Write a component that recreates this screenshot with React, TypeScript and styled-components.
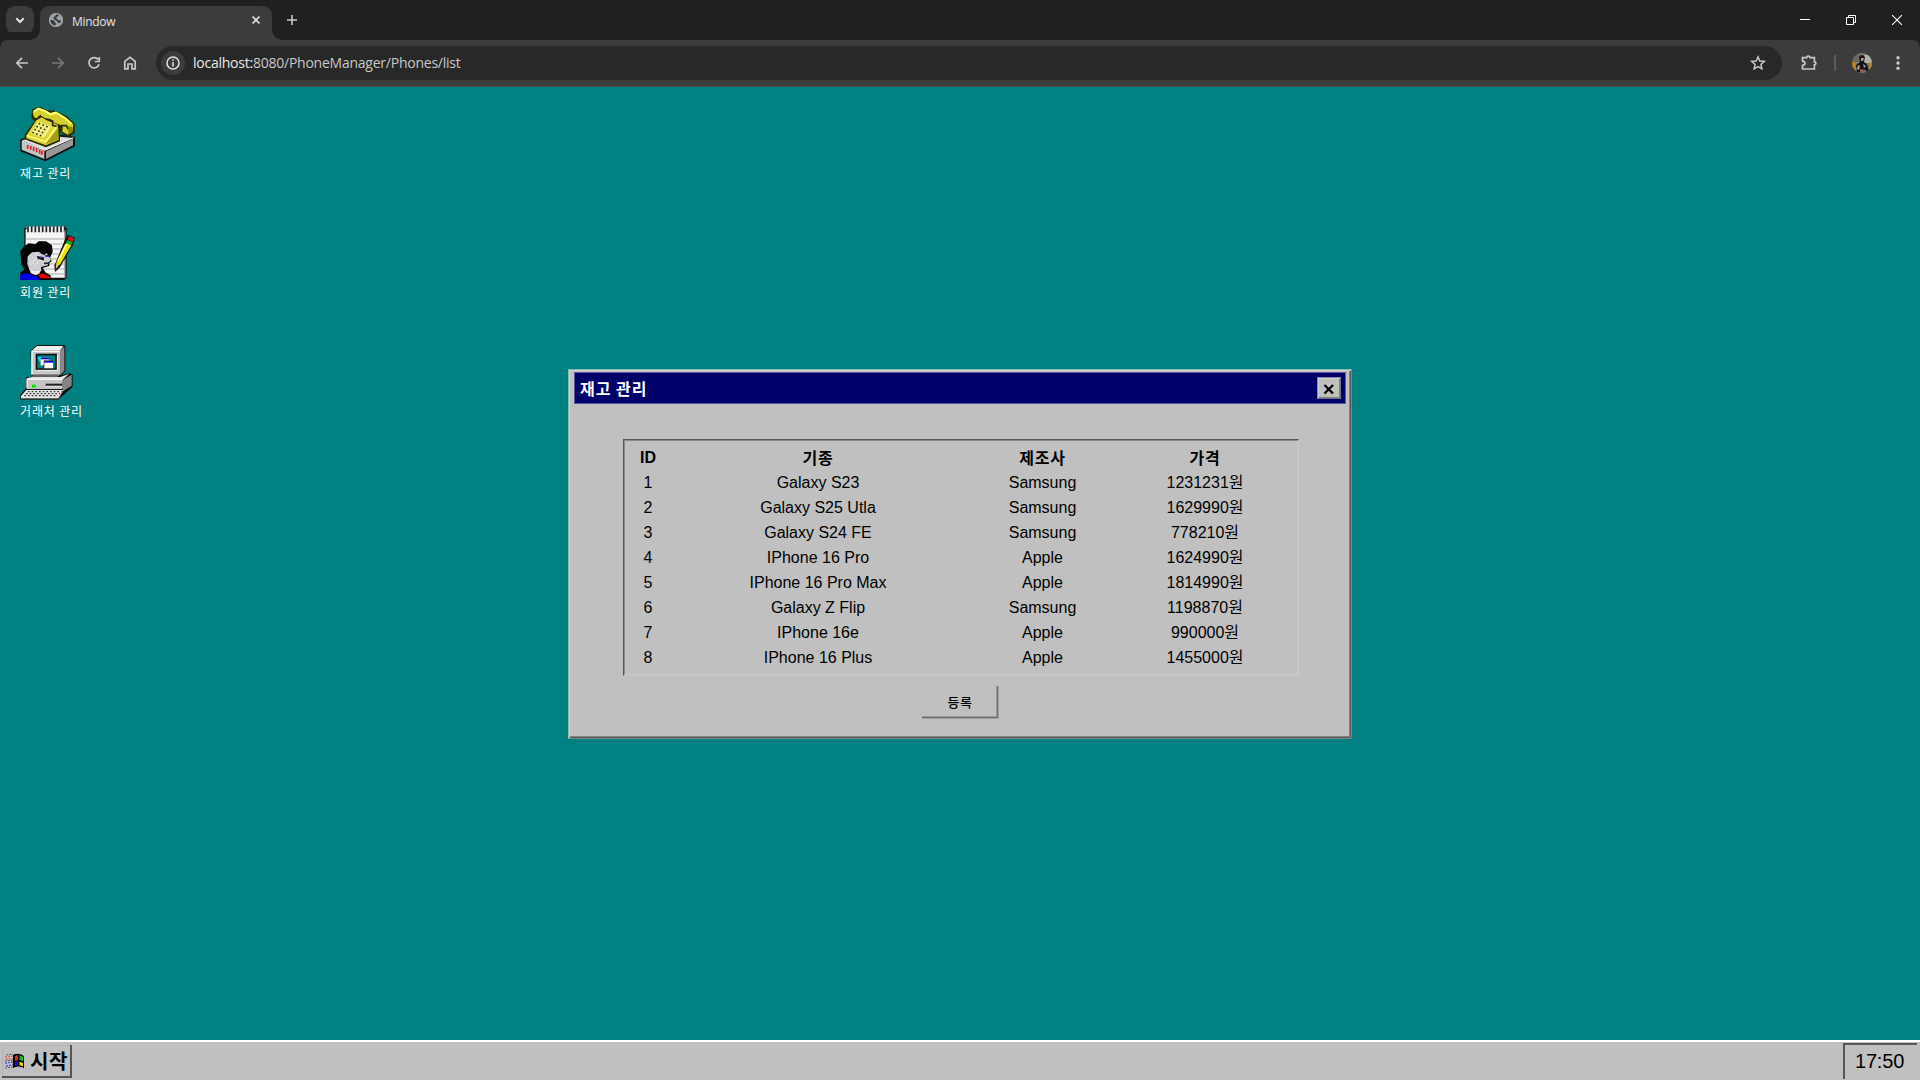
import React from "react";
import styled, { createGlobalStyle } from "styled-components";

const Global = createGlobalStyle`
  * { box-sizing: border-box; }
  body { margin: 0; overflow: hidden; background: #008080; }
`;

const retro = `"Liberation Sans", "Noto Sans CJK KR", sans-serif`;
const chrome = `"Open Sans", "Noto Sans", sans-serif`;

const Screen = styled.div`
  width: 1920px;
  height: 1080px;
  display: flex;
  flex-direction: column;
  font-family: ${retro};
`;

/* Browser frame */
const TabStrip = styled.div`
  height: 40px;
  flex: none;
  display: flex;
  background: #1f2120;
  padding-left: 6px;
`;
const TabSearch = styled.div`
  width: 28px;
  height: 28px;
  margin-top: 6px;
  border-radius: 9px;
  background: #3c3c3c;
`;
const Tab = styled.div`
  position: relative;
  width: 232px;
  height: 34px;
  margin: 6px 0 0 6px;
  border-radius: 9px 9px 0 0;
  background: #3c3c3c;
  display: flex;
  align-items: center;
  padding: 0 9px 6px 8px;
  &::before, &::after {
    content: "";
    position: absolute;
    bottom: 0;
    width: 10px;
    height: 10px;
  }
  &::before { left: -10px; background: radial-gradient(circle at 0 0, transparent 9.5px, #3c3c3c 10px); }
  &::after { right: -10px; background: radial-gradient(circle at 100% 0, transparent 9.5px, #3c3c3c 10px); }
`;
const TabTitle = styled.span`
  flex: 1;
  margin-left: 8px;
  padding-top: 3px;
  font: 12px/16px ${chrome};
  letter-spacing: -0.3px;
  color: #e3e3e3;
`;
const NewTab = styled.div`
  margin: 12px 0 0 12px;
  width: 16px;
  height: 16px;
`;
const WindowButtons = styled.div`
  margin-left: auto;
  height: 40px;
  display: flex;
  gap: 36px;
  padding: 15px 18px 0 0;
`;
const Toolbar = styled.div`
  height: 47px;
  flex: none;
  display: flex;
  align-items: center;
  background: #3c3c3c;
  border-bottom: 1px solid #514f4e;
  padding: 0 12px;
  border-radius: 8px 8px 0 0;
  box-shadow: 0 -8px 0 #1f2120;
`;
const NavButtons = styled.div`
  display: flex;
  gap: 16px;
  width: 144px;
  flex: none;
`;
const AddressBar = styled.div`
  width: 1626px;
  flex: none;
  height: 34px;
  border-radius: 17px;
  background: #282828;
  display: flex;
  align-items: center;
  padding: 0 14px 0 5px;
`;
const InfoBadge = styled.div`
  width: 24px;
  height: 24px;
  border-radius: 50%;
  background: #3c3c3c;
`;
const Url = styled.div`
  flex: 1;
  margin-left: 8px;
  font: 14px/20px ${chrome};
  letter-spacing: -0.24px;
  color: #c7c7c7;
`;
const Host = styled.span`
  color: #e8e8e8;
`;
const Extras = styled.div`
  display: flex;
  align-items: center;
  flex: none;
  margin-left: 17px;
`;
const Divider = styled.i`
  width: 2px;
  height: 16px;
  margin: 0 16px 0 15px;
  background: #5b5b5b;
`;
const MenuSlot = styled.div`
  margin-left: 16px;
  height: 20px;
`;

/* Desktop */
const Desktop = styled.main`
  flex: 1;
  background: #008080;
  padding-top: 20px;
  display: flex;
  position: relative;
`;
const Shortcuts = styled.nav`
  display: flex;
  flex-direction: column;
  padding-left: 20px;
`;
const Shortcut = styled.a`
  height: 119px;
  color: #fff;
  font: 12px/18px "Noto Sans CJK KR", sans-serif;
  letter-spacing: 0.85px;
  svg { display: block; }
  span { display: block; margin-top: 1px; white-space: nowrap; }
`;
const Dialog = styled.section`
  position: absolute;
  left: 568px;
  top: 282px;
  width: 784px;
  height: 370px;
  background: #c0c0c0;
  border: 1px solid;
  border-color: #8fb9b9 #7b8484 #7b8484 #8fb9b9;
  box-shadow: inset 1px 1px #d0d0d0, inset -1px -1px #5b5b5b, inset -2px -2px #808080;
  padding: 2px 5px;
  display: flex;
  flex-direction: column;
`;
const TitleBar = styled.header`
  height: 32px;
  background: #00006a;
  border: 1px solid #59599b;
  display: flex;
  align-items: center;
  justify-content: space-between;
  padding: 0 4px 0 5px;
  color: #fff;
  font: bold 16px/24px "Noto Sans CJK KR", sans-serif;
  letter-spacing: 1px;
`;
const CloseButton = styled.button`
  width: 24px;
  height: 22px;
  margin: 0;
  padding: 1px 1px 0 0;
  background: #c0c0c0;
  border: 1px solid;
  border-color: #8585b0 #707080 #707080 #8585b0;
  box-shadow: inset 1px 1px #d0d0d0, inset -1px -1px #808080;
  display: grid;
  place-items: center;
`;
const ListFrame = styled.div`
  margin: 35px 47px 0 49px;
  height: 237px;
  border: 1px solid;
  border-color: #555 #c7c7c7 #c7c7c7 #555;
  box-shadow: inset 1px 1px #8b8b8b, inset -1px -1px #c6c6c6;
  padding: 5px 0 0 1px;
`;
const Row = styled.div`
  display: grid;
  grid-template-columns: 46px 294px 155px 170px;
  height: 25px;
  line-height: 25px;
  font-size: 16px;
  color: #000;
  text-align: center;
`;
const Cell = styled.span`
  white-space: nowrap;
`;
const HeadCell = styled(Cell)<{ $hangul?: boolean }>`
  font-weight: 700;
  letter-spacing: ${(p) => (p.$hangul ? "0.7px" : "0")};
  padding-top: ${(p) => (p.$hangul ? "1px" : "0")};
`;
const RegisterButton = styled.button`
  align-self: center;
  width: 77px;
  height: 33px;
  margin: 10px 0 0 1px;
  padding: 0 1px 2px 0;
  background: #c0c0c0;
  border: 0;
  box-shadow: inset -1px -1px #a0a0a0, inset -2px -2px #707070, inset -3px -3px #989898;
  font: 500 13px/20px "Noto Sans CJK KR", sans-serif;
  letter-spacing: 0.5px;
  color: #000;
`;
const Taskbar = styled.footer`
  height: 40px;
  flex: none;
  background: #c0c0c0;
  border-top: 2px solid #fff;
  display: flex;
  justify-content: space-between;
  padding: 0 3px 0 2px;
`;
const StartButton = styled.button`
  width: 70px;
  height: 33px;
  margin: 3px 0 0;
  padding: 0 0 1px 3px;
  border: 0;
  background: #c0c0c0;
  box-shadow: inset -2px -2px #555, inset 1px 1px #b4b4b4;
  display: flex;
  align-items: center;
  font: bold 20px/28px "Noto Sans CJK KR", sans-serif;
  letter-spacing: 0.7px;
  gap: 4px;
  color: #000;
`;
const Clock = styled.div`
  width: 74px;
  height: 36px;
  margin-top: 1px;
  border-left: 2px solid #555;
  border-top: 2px solid #555;
  padding-left: 10px;
  font-size: 20px;
  line-height: 33px;
  letter-spacing: -0.2px;
  color: #000;
`;

const Stroke: React.FC<{ d: string; size?: number; color?: string; w?: number; children?: React.ReactNode }> = ({
  d, size = 20, color = "#c7c7c7", w = 1.7, children,
}) => (
  <svg width={size} height={size} viewBox={`0 0 ${size} ${size}`} fill="none" stroke={color} strokeWidth={w}>
    <path d={d} />
    {children}
  </svg>
);

const PhoneIcon = () => (
  <svg width="56" height="56" viewBox="30 36 168 168">
    <path d="M31 133L100 112L195 125V154L106 199L31 169Z" fill="#111" />
    <path d="M36 136L95 120L190 129L105 166Z" fill="#ddd" />
    <path d="M35 139L103 168V192L35 164Z" fill="#c4c4c4" />
    <path d="M108 169L189 131V151L108 192Z" fill="#999" />
    <path d="M36 138L104 166L190 128" fill="none" stroke="#fff" strokeWidth="3" />
    <path d="M53 150v11M62 153v11M71 157v11M80 160v12M89 164v12M96 167v12" stroke="#e11b24" strokeWidth="5" />
    <path d="M67 43L88 35L110 45L134 47L171 64L194 86V115L174 127L156 116L150 109V139L108 157L44 133V119L73 79L64 69Z" fill="#2b2b00" />
    <path d="M68 51L82 39L101 43L121 54L137 50L169 68L190 88L187 111L174 119L157 110L158 92L133 83L121 73L105 69L93 62L81 70L72 67Z" fill="#d5cf2c" />
    <path d="M71 50L86 41L107 49L121 58L138 53L166 70L184 86" fill="none" stroke="#ffff78" strokeWidth="6" />
    <path d="M78 77L95 67L110 76L143 89L146 134L108 151L49 130V122Z" fill="#dcd63a" />
    <path d="M50 121L107 140L141 93" fill="none" stroke="#ffff70" strokeWidth="4" />
    <path d="M110 143L145 98V132L110 148Z" fill="#a39b18" />
    <path d="M84 79L123 95L102 128L63 115Z" fill="#f6f08a" />
    <path d="M86 85L116 97M79 94L110 106M73 103L104 115M67 112L98 124" stroke="#3a3a08" strokeWidth="5" strokeDasharray="5 7" />
    <path d="M112 72L128 78V91L140 94M153 92H169L175 103M93 61L83 69" fill="none" stroke="#343000" strokeWidth="5" />
    <path d="M175 93L187 97V110L175 117Z" fill="#908706" />
  </svg>
);

const MemberIcon = () => (
  <svg width="56" height="56" viewBox="30 33 168 168">
    <path d="M43 39H170V189L162 195H43Z" fill="#111" />
    <path d="M47 43H165V188H47Z" fill="#f5f5f5" />
    <path d="M47 72H162M47 87H162M47 102H162M47 117H162M47 132H162M47 147H162M47 162H162M47 177H162" stroke="#c4c4c4" strokeWidth="4" />
    <path d="M50 43H165" stroke="#eee" strokeWidth="17" />
    <path d="M54 34V52M65 34V52M76 34V52M87 34V52M98 34V52M109 34V52M120 34V52M131 34V52M142 34V52M153 34V52M164 34V52" stroke="#222" strokeWidth="5" />
    <path d="M165 45V188" stroke="#888" strokeWidth="4" />
    <path d="M31 109L42 94L57 85L76 88L86 79H108L126 91L128 110L120 128L125 139L118 143V153L98 159L108 174L122 181V195H31V173L43 163L34 147Z" fill="#000" />
    <path d="M53 124L66 112L87 110L95 117L104 120L110 114L116 124L123 135L114 143V151L93 156L94 167L78 174L58 164L52 146Z" fill="#cbcbd2" />
    <path d="M55 130L83 157M61 121L90 151M70 115L98 143M78 114L104 137M58 151L88 120M71 158L100 123" stroke="#fff" strokeWidth="3" strokeDasharray="3 4" />
    <path d="M84 126L99 128V133L85 129ZM101 108H111M106 123L121 122" fill="none" stroke="#111" strokeWidth="5" />
    <path d="M87 128H97M106 124H118" stroke="#3535dc" strokeWidth="4" />
    <path d="M102 145H115" stroke="#222" strokeWidth="5" />
    <path d="M31 195V181L44 174L67 179L88 190V195Z" fill="#0000e9" />
    <path d="M85 181L96 175L118 184L120 190H92Z" fill="#f00000" />
    <path d="M59 162L72 168L92 167L87 177L76 180L62 174Z" fill="#eee" />
    <path d="M167 69L175 59L194 68L192 84L150 157L135 171L133 152Z" fill="#111" />
    <path d="M170 83L184 91L150 149L139 151V143Z" fill="#e8e000" />
    <path d="M169 87L144 139" stroke="#ffff80" strokeWidth="6" />
    <path d="M172 75L188 82L184 90L168 83Z" fill="#00b631" />
    <path d="M177 62L193 70L188 81L173 74Z" fill="#cf1019" />
    <path d="M138 148L147 151L137 163Z" fill="#e4c87f" />
  </svg>
);

const ComputerIcon = () => (
  <svg width="56" height="56" viewBox="30 30 168 168">
    <path d="M61 48L81 30H162L166 34V109L153 121L181 114L188 120V155L145 194H31V179L48 160V126H65Z" fill="#111" />
    <path d="M65 47L81 33H160L150 47Z" fill="#eee" />
    <path d="M151 46L163 35V108L151 119Z" fill="#898989" />
    <path d="M64 47H151V119H64Z" fill="#c8c8c8" />
    <path d="M66 118V49H149" fill="none" stroke="#f4f4f4" strokeWidth="4" />
    <path d="M77 56H141V105H77Z" fill="#101010" />
    <path d="M82 61H136V100H82Z" fill="#008080" />
    <path d="M80 106H142V60" fill="none" stroke="#eee" strokeWidth="3" />
    <path d="M85 66H93V79H87V73H83Z" fill="#00f0ee" />
    <path d="M92 68H117V91H92Z" fill="#fff" />
    <path d="M92 68H117V73H92Z" fill="#0000cb" />
    <path d="M102 77H131V101H102Z" fill="#fff" stroke="#111" strokeWidth="2" />
    <path d="M103 78H130V83H103Z" fill="#0000e0" />
    <path d="M68 120H150L138 128H66Z" fill="#646464" />
    <path d="M50 130L65 126H151L177 117L158 134H50Z" fill="#e3e3e3" />
    <path d="M50 134H158V162H50Z" fill="#c4c4c4" />
    <path d="M159 134L185 119V152L159 169Z" fill="#858585" />
    <path d="M51 158V133H158" fill="none" stroke="#fff" strokeWidth="3" />
    <path d="M66 149H77V158H66Z" fill="#00e600" />
    <path d="M107 149H157" stroke="#222" strokeWidth="6" />
    <path d="M108 155H157" stroke="#eee" strokeWidth="2" />
    <path d="M49 165H160L146 189H33V183Z" fill="#e4e4e4" />
    <path d="M54 170H155M48 176H150M43 182H143" stroke="#333" strokeWidth="4" strokeDasharray="5 6" />
    <path d="M33 191H145L158 169" fill="none" stroke="#777" strokeWidth="3" />
  </svg>
);

const StartLogo = () => (
  <svg width="21" height="20" viewBox="0 0 21 20">
    <path d="M8 4Q13 1 19 5V17Q13 14 8 17Z" fill="#000" />
    <path d="M10 5L13 4V9L10 10Z" fill="#f02020" />
    <path d="M14.5 4L18 6V10L14.5 9Z" fill="#10c020" />
    <path d="M10 11L13 10V14L10 15Z" fill="#1010e8" />
    <path d="M14.5 10.5L18 12V15.5L14.5 14Z" fill="#f0e000" />
    <path d="M0 6L8 5M1 8.5L8 7.5" stroke="#e06060" strokeWidth="1.4" strokeDasharray="2 1" />
    <path d="M0 12L8 11M1 15L8 14" stroke="#5050e0" strokeWidth="1.4" strokeDasharray="2 1" />
    <path d="M1 4L8 3M0 10L8 9M0 17L8 16" stroke="#555" strokeWidth=".9" strokeDasharray="2 1" />
  </svg>
);

const Avatar = () => (
  <svg width="20" height="20" viewBox="0 0 20 20">
    <defs><clipPath id="face"><circle cx="10" cy="10" r="10" /></clipPath></defs>
    <g clipPath="url(#face)">
      <path d="M0 0H20V20H0Z" fill="#807a70" />
      <path d="M0 0H8V9H0Z" fill="#6e685f" />
      <path d="M12 2H20V10H12Z" fill="#b3b0a7" />
      <path d="M0 10L3 9L4 19H0ZM17 10L20 9V19L17 17Z" fill="#b98517" />
      <path d="M7 4Q10 0 13 4L12 9L15 11L17 18L12 19H5L4 12L8 9Z" fill="#10151d" />
      <path d="M9 5L12 5L11 8H9ZM6 12L8 13L7 17L5 16ZM11 11L14 13L12 15Z" fill="#bd9582" />
      <path d="M8 16L14 17V20H8Z" fill="#8a6150" />
    </g>
  </svg>
);

const phones = [
  ["1", "Galaxy S23", "Samsung", "1231231원"],
  ["2", "Galaxy S25 Utla", "Samsung", "1629990원"],
  ["3", "Galaxy S24 FE", "Samsung", "778210원"],
  ["4", "IPhone 16 Pro", "Apple", "1624990원"],
  ["5", "IPhone 16 Pro Max", "Apple", "1814990원"],
  ["6", "Galaxy Z Flip", "Samsung", "1198870원"],
  ["7", "IPhone 16e", "Apple", "990000원"],
  ["8", "IPhone 16 Plus", "Apple", "1455000원"],
];

export default function App() {
  return (
    <Screen>
      <Global />
      <TabStrip>
        <TabSearch><Stroke size={28} color="#e3e3e3" w={2} d="M10.3 12.3L14 16L17.7 12.3" /></TabSearch>
        <Tab>
          <svg width="16" height="16" viewBox="0 0 16 16">
            <circle cx="8" cy="8" r="7" fill="#9aa0a6" />
            <path d="M2 8H5L7 10L8 12L7 14L4.5 13L2.5 11ZM8 2H11L10.5 4L8.5 5V6.5L10 8L13 8.5L12 11L10 11L9 9L6 7.5L5.5 5L7.5 4Z" fill="#3c3c3c" />
            <circle cx="8" cy="8" r="6.4" fill="none" stroke="#9aa0a6" strokeWidth="1.4" />
          </svg>
          <TabTitle>Mindow</TabTitle>
          <Stroke size={14} color="#e3e3e3" w={1.6} d="M3.5 3.5L10.5 10.5M10.5 3.5L3.5 10.5" />
        </Tab>
        <NewTab><Stroke size={16} w={1.6} d="M8 3V13M3 8H13" /></NewTab>
        <WindowButtons>
          <Stroke size={10} color="#fff" w={1} d="M0 4.5H10" />
          <Stroke size={10} color="#fff" w={1} d="M.5 2.5H7.5V9.5H.5ZM2.5 2.5V.5H9.5V7.5H7.5" />
          <Stroke size={10} color="#fff" w={1.1} d="M0 0L10 10M10 0L0 10" />
        </WindowButtons>
      </TabStrip>
      <Toolbar>
        <NavButtons>
          <Stroke d="M16 10H5M10 4.8L4.8 10L10 15.2" />
          <Stroke color="#757575" d="M4 10H15M10 4.8L15.2 10L10 15.2" />
          <Stroke d="M14.2 6.5A5.2 5.2 0 1 0 15.1 11.3M15.3 4V8.5H10.8" />
          <Stroke d="M4.8 15.8V8.4L10 4.4L15.2 8.4V15.8H12V11H8V15.8Z" />
        </NavButtons>
        <AddressBar>
          <InfoBadge>
            <Stroke size={24} color="#e3e3e3" w={1.5} d="M12 11V15.5M12 8.2V9.8"><circle cx="12" cy="12" r="6" /></Stroke>
          </InfoBadge>
          <Url><Host>localhost:</Host>8080/PhoneManager/Phones/list</Url>
          <Stroke w={1.5} d="M10 3.8L11.8 8L16.3 8.4L12.9 11.4L13.9 15.8L10 13.5L6.1 15.8L7.1 11.4L3.7 8.4L8.2 8Z" />
        </AddressBar>
        <Extras>
          <Stroke size={20} d="M3.5 4.6H7.7C7.7 2.6 11 2.6 11 4.6H15.4V8.8C17.4 8.8 17.4 11.8 15.4 11.8V16H3.5V12.4C6.8 12 6.8 8.6 3.5 8.2Z" />
          <Divider />
          <Avatar />
          <MenuSlot>
            <svg width="20" height="20" viewBox="0 0 20 20" fill="#c7c7c7">
              <circle cx="10" cy="4.7" r="1.7" /><circle cx="10" cy="10" r="1.7" /><circle cx="10" cy="15.3" r="1.7" />
            </svg>
          </MenuSlot>
        </Extras>
      </Toolbar>
      <Desktop>
        <Shortcuts>
          <Shortcut><PhoneIcon /><span>재고 관리</span></Shortcut>
          <Shortcut><MemberIcon /><span>회원 관리</span></Shortcut>
          <Shortcut><ComputerIcon /><span>거래처 관리</span></Shortcut>
        </Shortcuts>
        <Dialog>
          <TitleBar>
            재고 관리
            <CloseButton><Stroke size={14} color="#000" w={2.4} d="M2.5 3L11 11.5M11 3L2.5 11.5" /></CloseButton>
          </TitleBar>
          <ListFrame>
            <Row>
              <HeadCell>ID</HeadCell>
              <HeadCell $hangul>기종</HeadCell>
              <HeadCell $hangul>제조사</HeadCell>
              <HeadCell $hangul>가격</HeadCell>
            </Row>
            {phones.map((row) => (
              <Row key={row[0]}>{row.map((value, i) => <Cell key={i}>{value}</Cell>)}</Row>
            ))}
          </ListFrame>
          <RegisterButton>등록</RegisterButton>
        </Dialog>
      </Desktop>
      <Taskbar>
        <StartButton><StartLogo />시작</StartButton>
        <Clock>17:50</Clock>
      </Taskbar>
    </Screen>
  );
}
